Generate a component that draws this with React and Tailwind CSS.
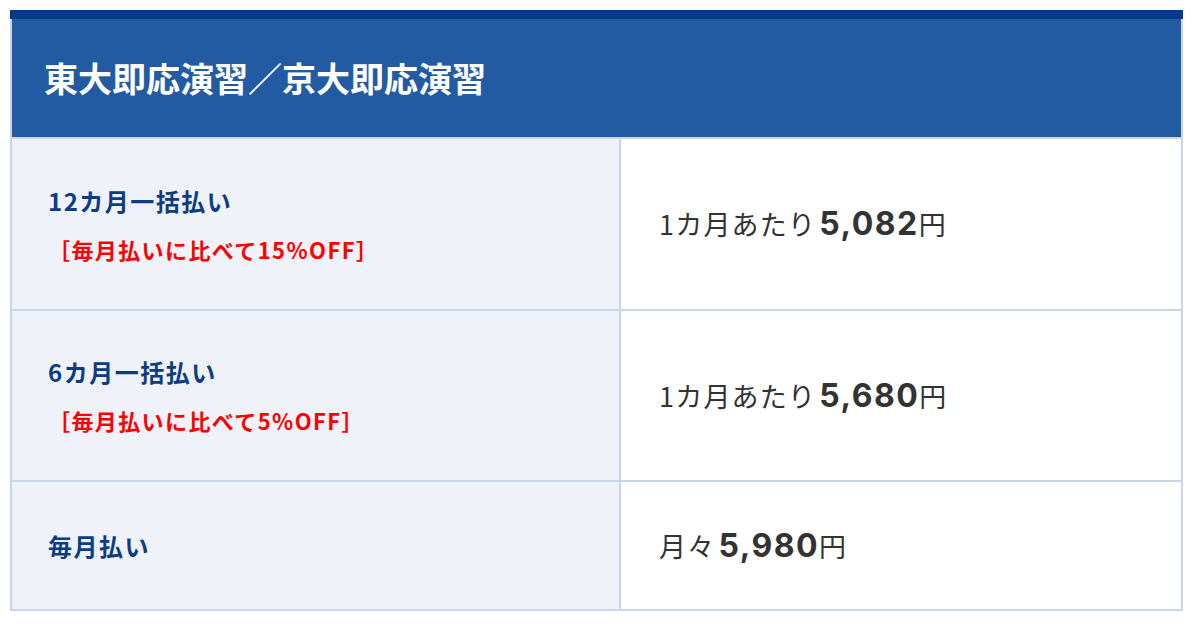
import React from "react";

const font = { fontFamily: '"Noto Sans CJK JP", "Noto Sans", sans-serif' };
const numFont = { fontFamily: 'Inter, "Noto Sans CJK JP", sans-serif' };

function LabelCell({ label, note }) {
  return (
    <div className="bg-[#eff2f8] flex flex-col justify-center pl-[36px]">
      <div className="text-[24px] leading-[36px] font-bold text-[#0b3d85] tracking-[1.5px]">{label}</div>
      {note && (
        <div className="mt-[14px] text-[22px] leading-[33px] font-bold text-[#ff0000] tracking-[1.4px]">{note}</div>
      )}
    </div>
  );
}

function PriceCell({ prefix, amount }) {
  return (
    <div className="bg-white flex items-center pl-[38px] text-[#333333]">
      <span className="text-[27px] leading-[40px] tracking-[1.2px]">{prefix}</span>
      <span className="text-[32px] leading-[40px] font-bold tracking-[1.5px] ml-[3px]" style={numFont}>{amount}</span>
      <span className="text-[27px] leading-[40px]">円</span>
    </div>
  );
}

export default function App() {
  return (
    <div className="bg-white w-[1194px] h-[624px] pt-[10px] pl-[10px]" style={font}>
      <div className="w-[1173px]">
        <div className="h-[9px] bg-[#003b87]" />
        <div className="grid grid-cols-[607px_560px] grid-rows-[118px_170px_169px_127px] gap-[2px] bg-[#c9d6e9] border-x-2 border-b-2 border-[#c9d6e9]">
          <div className="col-span-2 bg-[#235ba3] flex items-center pl-[32px]">
            <h1 className="text-white text-[34px] font-bold leading-[44px]">東大即応演習／京大即応演習</h1>
          </div>
          <LabelCell label="12カ月一括払い" note="［毎月払いに比べて15%OFF］" />
          <PriceCell prefix="1カ月あたり" amount="5,082" />
          <LabelCell label="6カ月一括払い" note="［毎月払いに比べて5%OFF］" />
          <PriceCell prefix="1カ月あたり" amount="5,680" />
          <LabelCell label="毎月払い" />
          <PriceCell prefix="月々" amount="5,980" />
        </div>
      </div>
    </div>
  );
}
